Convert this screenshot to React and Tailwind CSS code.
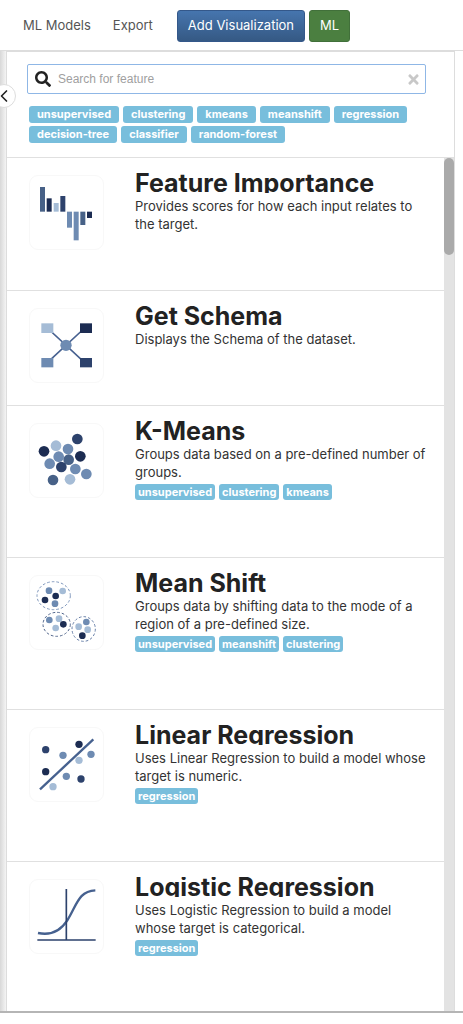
import { useState } from "react";
import { ChevronLeft } from "lucide-react";
import { FaSearch, FaTimes } from "react-icons/fa";

const NAVY = "#1c2c52";
const INDIGO = "#2d426c";
const STEEL = "#476187";
const BLUE = "#6e8bb2";
const PALE = "#a5bcd6";

const allTags = [
  "unsupervised",
  "clustering",
  "kmeans",
  "meanshift",
  "regression",
  "decision-tree",
  "classifier",
  "random-forest",
];

function Dots({ items, r }) {
  return items.map(([cx, cy, fill]) => (
    <circle key={`${cx}-${cy}`} cx={cx} cy={cy} r={r} fill={fill} />
  ));
}

function ImportanceIcon() {
  const bars = [
    [33, 36, 74, STEEL],
    [53, 70, 40, NAVY],
    [74, 84, 26, PALE],
    [94, 63, 47, INDIGO],
    [114, 110, 48, BLUE],
    [134, 110, 86, BLUE],
    [154, 110, 40, STEEL],
    [174, 110, 19, NAVY],
  ];
  return bars.map(([x, y, height, fill]) => (
    <rect key={x} x={x} y={y} width="15" height={height} fill={fill} />
  ));
}

function SchemaIcon() {
  return (
    <>
      <path d="M55 60L167 164M167 60L55 164" stroke="#476190" strokeWidth="5" />
      <rect x="37" y="46" width="36" height="29" fill={PALE} />
      <rect x="153" y="46" width="36" height="29" fill={NAVY} />
      <rect x="37" y="150" width="36" height="28" fill={BLUE} />
      <rect x="153" y="150" width="36" height="28" fill={INDIGO} />
      <circle cx="111" cy="112" r="17" fill={BLUE} />
    </>
  );
}

function KMeansIcon() {
  const items = [
    [145, 48, INDIGO],
    [81, 68, PALE],
    [117, 78, BLUE],
    [45, 85, NAVY],
    [89, 101, BLUE],
    [154, 100, NAVY],
    [119, 110, STEEL],
    [62, 122, BLUE],
    [97, 132, INDIGO],
    [139, 138, BLUE],
    [172, 153, BLUE],
    [72, 171, STEEL],
    [123, 169, PALE],
  ];
  return <Dots items={items} r={16} />;
}

function MeanShiftIcon() {
  const items = [
    [60, 47, BLUE],
    [101, 48, PALE],
    [80, 63, NAVY],
    [48, 75, NAVY],
    [78, 86, BLUE],
    [61, 135, BLUE],
    [90, 131, PALE],
    [103, 148, NAVY],
    [80, 159, PALE],
    [172, 141, BLUE],
    [149, 155, PALE],
    [176, 164, PALE],
    [160, 182, NAVY],
  ];
  return (
    <>
      <g fill="none" strokeWidth="3" strokeDasharray="8 6">
        <ellipse cx="74" cy="62" rx="50" ry="42" stroke="#8098bd" />
        <ellipse cx="83" cy="148" rx="41" ry="36" stroke="#52668c" />
        <ellipse cx="164" cy="162" rx="35" ry="37" stroke="#6880a8" />
      </g>
      <Dots items={items} r={10} />
    </>
  );
}

function LinearIcon() {
  const items = [
    [50, 68, INDIGO],
    [102, 85, BLUE],
    [150, 52, NAVY],
    [186, 82, BLUE],
    [150, 100, PALE],
    [50, 134, NAVY],
    [112, 148, BLUE],
    [156, 156, INDIGO],
    [72, 179, PALE],
  ];
  return (
    <>
      <Dots items={items} r={11} />
      <path d="M33 187L193 37" stroke="#46618f" strokeWidth="7" />
    </>
  );
}

function LogisticIcon() {
  return (
    <g fill="none">
      <path
        d="M27 162C68 171 94 156 115 124C143 80 148 36 199 34"
        stroke="#46618f"
        strokeWidth="7"
      />
      <path d="M25 183H200M112 30V183" stroke={INDIGO} strokeWidth="5" />
    </g>
  );
}

const features = [
  {
    title: "Feature Importance",
    text: "Provides scores for how each input relates to the target.",
    Icon: ImportanceIcon,
    tags: [],
  },
  {
    title: "Get Schema",
    text: "Displays the Schema of the dataset.",
    Icon: SchemaIcon,
    tags: [],
  },
  {
    title: "K-Means",
    text: "Groups data based on a pre-defined number of groups.",
    Icon: KMeansIcon,
    tags: ["unsupervised", "clustering", "kmeans"],
  },
  {
    title: "Mean Shift",
    text: "Groups data by shifting data to the mode of a region of a pre-defined size.",
    Icon: MeanShiftIcon,
    tags: ["unsupervised", "meanshift", "clustering"],
  },
  {
    title: "Linear Regression",
    text: "Uses Linear Regression to build a model whose target is numeric.",
    Icon: LinearIcon,
    tags: ["regression"],
  },
  {
    title: "Logistic Regression",
    text: "Uses Logistic Regression to build a model whose target is categorical.",
    Icon: LogisticIcon,
    tags: ["regression"],
  },
];

function FeatureRow({ title, text, Icon, tags }) {
  return (
    <li className="flex border-b border-[#e0e0e0] pt-[15px] pr-3 pb-[57px] pl-[22px] last:border-b-0 last:pb-[55px]">
      <div className="mt-0.5 -mb-10 size-[75px] shrink-0 rounded-[9px] border border-[#f8f8f8]">
        <svg viewBox="0 0 225 225" className="-m-px size-[75px]" aria-hidden="true">
          <Icon />
        </svg>
      </div>
      <div className="ml-[31px] min-w-0 flex-1">
        <h2 className="overflow-hidden text-[25px] leading-5 font-bold text-[#222]">
          {title}
        </h2>
        <p className="mt-1 text-[13px] leading-[18px] text-[#333]">{text}</p>
        {tags.length > 0 && (
          <div className="flex flex-wrap gap-1 pt-[3px]">
            {tags.map((tag) => (
              <span
                key={tag}
                className="rounded-[3px] bg-[#78bedc] px-[3px] text-[11px] leading-4 font-bold text-white"
              >
                {tag}
              </span>
            ))}
          </div>
        )}
      </div>
    </li>
  );
}

export default function App() {
  const [query, setQuery] = useState("");

  return (
    <div className="bg-white font-[Inter,sans-serif] text-[#333]">
      <header className="flex h-[51px] items-center border-b border-[#ddd] pt-0.5 pl-[23px] text-[13px]">
        <a href="#models" className="text-[#555]">
          ML Models
        </a>
        <a href="#export" className="ml-[22px] text-[#555]">
          Export
        </a>
        <button
          type="button"
          className="ml-6 h-8 rounded-[3px] border border-[#34588a] bg-linear-to-b from-[#4675ae] to-[#355984] px-2.5 text-white"
        >
          Add Visualization
        </button>
        <button
          type="button"
          className="ml-1 h-8 rounded-[3px] border border-[#41703a] bg-[#4b7f40] px-2.5 text-white"
        >
          ML
        </button>
      </header>

      <main className="relative flex border-b-2 border-[#b5b5b5] pr-2">
        <div className="w-1.5 shrink-0 bg-linear-to-r from-[#d8d8d8] to-[#f4f4f4]" />
        <button
          type="button"
          aria-label="Collapse panel"
          className="absolute top-[33px] -left-2 flex size-6 items-center justify-center rounded-full border border-[#ddd] bg-white text-[#222]"
        >
          <ChevronLeft size={20} strokeWidth={2} />
        </button>

        <section className="min-w-0 flex-1 border-x border-t border-[#ddd]">
          <div className="border-b border-[#e0e0e0] pt-3 pb-3.5 pl-5">
            <div className="mr-7 flex h-[30px] items-center rounded-[2px] border border-[#8fb7e6] pr-1 pl-[7px]">
              <FaSearch size={16} className="shrink-0 text-[#222]" />
              <input
                type="text"
                aria-label="Search for feature"
                placeholder="Search for feature"
                value={query}
                onChange={(e) => setQuery(e.target.value)}
                className="ml-[7px] min-w-0 flex-1 font-['Liberation_Sans',sans-serif] text-xs outline-none placeholder:text-[#a0a0a0]"
              />
              <button
                type="button"
                aria-label="Clear search"
                onClick={() => setQuery("")}
                className="text-[#c8c8c8]"
              >
                <FaTimes size={15} />
              </button>
            </div>
            <div className="mt-3 mr-8 ml-0.5 flex flex-wrap gap-x-1 gap-y-[3px]">
              {allTags.map((tag) => (
                <button
                  key={tag}
                  type="button"
                  className="rounded-[3px] bg-[#78bedc] px-2 text-[11px] leading-[17px] font-bold text-white"
                >
                  {tag}
                </button>
              ))}
            </div>
          </div>

          <div className="flex">
            <ul className="min-w-0 flex-1">
              {features.map((feature) => (
                <FeatureRow key={feature.title} {...feature} />
              ))}
            </ul>
            <div className="w-2.5 shrink-0 bg-[#e3e3e3]">
              <div className="h-[97px] rounded-full bg-[#aaa]" />
            </div>
          </div>
        </section>
      </main>
    </div>
  );
}
